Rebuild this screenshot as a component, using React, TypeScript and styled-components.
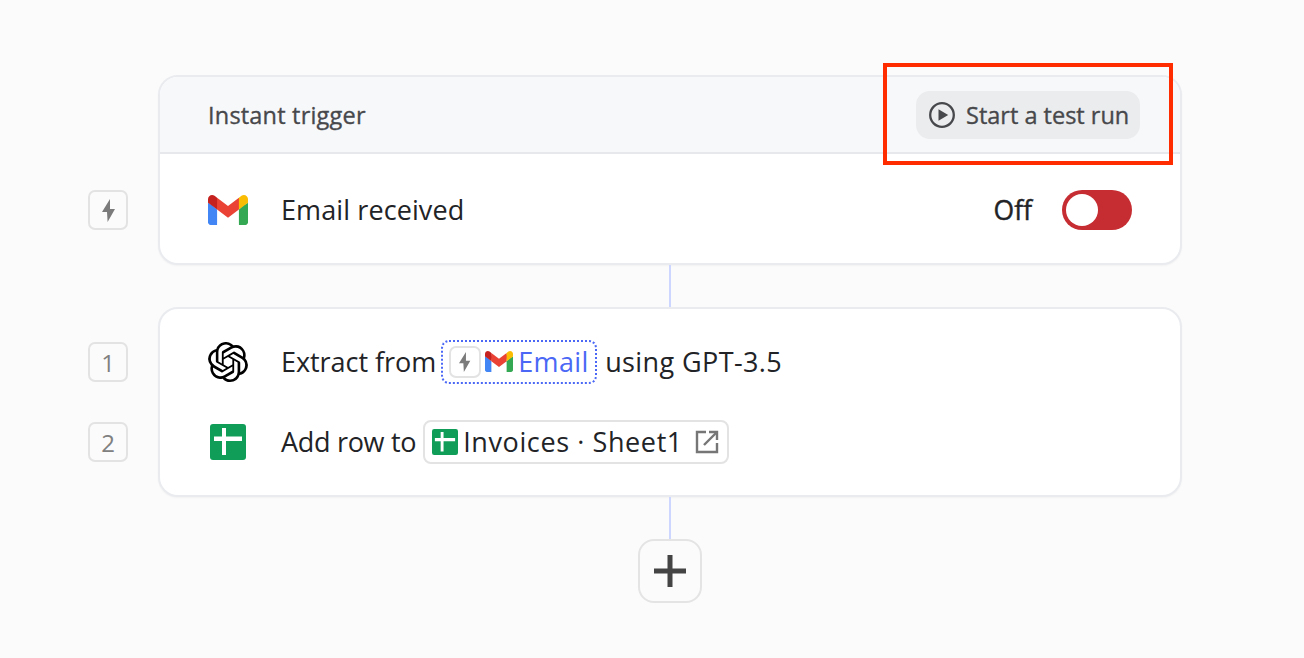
import React from 'react';
import styled, { createGlobalStyle } from 'styled-components';
import { SiOpenai } from 'react-icons/si';

const GlobalStyle = createGlobalStyle`
  html, body {
    margin: 0;
    height: 658px;
    overflow: hidden;
    background: #fbfbfb;
    font-family: "Open Sans", "Noto Sans", sans-serif;
    color: #222326;
  }
`;

const Page = styled.div`
  position: relative;
  box-sizing: border-box;
  width: 1304px;
  height: 658px;
  padding: 75px 122px 0 158px;
  display: flex;
  flex-direction: column;
  align-items: center;
`;

const Card = styled.section`
  box-sizing: border-box;
  width: 100%;
  height: 190px;
  background: #fff;
  border: 2px solid #e9ebef;
  border-radius: 20px;
  box-shadow: 0 1px 2px rgba(16, 24, 40, 0.04);
`;

const CardHeader = styled.header`
  box-sizing: border-box;
  height: 77px;
  padding: 0 40px 0 48px;
  display: flex;
  align-items: center;
  justify-content: space-between;
  background: #f7f8fa;
  border-bottom: 2px solid #e6e8ec;
  border-radius: 18px 18px 0 0;
  font-size: 23.5px;
  letter-spacing: 0.2px;
  -webkit-text-stroke: 0.35px #47484b;
  color: #47484b;
`;

const TestButton = styled.button`
  box-sizing: border-box;
  width: 224px;
  height: 48px;
  padding: 0 0 0 13px;
  display: flex;
  align-items: center;
  gap: 11px;
  border: 0;
  border-radius: 14px;
  background: #ebecee;
  color: #47484b;
  font: inherit;
  letter-spacing: 0;
`;

const TriggerBody = styled.div`
  box-sizing: border-box;
  height: 109px;
  padding: 3px 48px 0 0;
  display: flex;
  align-items: center;
  justify-content: space-between;
`;

const StepList = styled.div`
  height: 186px;
  box-sizing: border-box;
  padding: 31px 0;
  display: flex;
  flex-direction: column;
  gap: 36px;
`;

const Row = styled.div`
  height: 44px;
  margin-left: -72px;
  display: flex;
  align-items: center;
`;

const SideBadge = styled.div`
  box-sizing: border-box;
  flex: none;
  width: 40px;
  height: 40px;
  margin-right: 80px;
  display: flex;
  align-items: center;
  justify-content: center;
  border: 2px solid #e3e3e3;
  border-radius: 7px;
  color: #808080;
  font-size: 24px;
`;

const IconSlot = styled.div`
  flex: none;
  width: 40px;
  margin-right: 33px;
  display: flex;
  justify-content: center;
`;

const Sentence = styled.div`
  display: flex;
  align-items: center;
  gap: 8px;
  font-size: 27px;
  letter-spacing: 0.1px;
  white-space: nowrap;
`;

const Words = styled.span<{ $spacing?: number }>`
  margin-bottom: 2px;
  ${(p) => (p.$spacing !== undefined ? `letter-spacing: ${p.$spacing}px;` : '')}
`;

const EmailChip = styled.span`
  box-sizing: border-box;
  width: 156px;
  height: 44px;
  margin-left: -3px;
  padding-left: 6px;
  display: flex;
  align-items: center;
  gap: 5px;
  border: 2px dotted #4a68f5;
  border-radius: 8px;
  color: #4a68f5;
  letter-spacing: 0.4px;
`;

const MiniBadge = styled.span`
  box-sizing: border-box;
  flex: none;
  width: 32px;
  height: 32px;
  margin-right: -1px;
  display: flex;
  align-items: center;
  justify-content: center;
  border: 2px solid #e3e3e3;
  border-radius: 7px;
`;

const SheetChip = styled.span`
  box-sizing: border-box;
  width: 306px;
  height: 44px;
  margin-left: -1px;
  padding-left: 7px;
  display: flex;
  align-items: center;
  gap: 5px;
  border: 2px solid #e3e3e3;
  border-radius: 8px;
  letter-spacing: 0.6px;
`;

const ChipLink = styled.svg`
  flex: none;
  margin-left: 7px;
`;

const ToggleArea = styled.div`
  display: flex;
  align-items: center;
  gap: 30px;
  font-size: 26.5px;
  -webkit-text-stroke: 0.4px #222326;
`;

const Toggle = styled.div`
  box-sizing: border-box;
  width: 70px;
  height: 40px;
  padding: 4px;
  border-radius: 20px;
  background: #c62d32;
`;

const Knob = styled.div`
  width: 32px;
  height: 32px;
  border-radius: 50%;
  background: #fff;
`;

const Connector = styled.div`
  flex: none;
  width: 2px;
  height: 42px;
  background: #ccd6ff;
`;

const AddButton = styled.button`
  box-sizing: border-box;
  flex: none;
  width: 64px;
  height: 64px;
  padding: 0;
  display: flex;
  align-items: center;
  justify-content: center;
  background: #fbfbfb;
  border: 2px solid #e4e4e4;
  border-radius: 16px;
  color: #444;
`;

const Highlight = styled.div`
  position: absolute;
  left: 883px;
  top: 63px;
  box-sizing: border-box;
  width: 290px;
  height: 102px;
  border: 4px solid #ff2c00;
`;

const GmailLogo: React.FC<{ width: number }> = ({ width }) => (
  <svg width={width} viewBox="0 0 256 193" style={{ display: 'block' }}>
    <path fill="#4285F4" d="M58.182 192.05V93.14L27.507 65.077 0 49.504v125.091c0 9.658 7.825 17.455 17.455 17.455h40.727Z" />
    <path fill="#34A853" d="M197.818 192.05h40.727c9.659 0 17.455-7.826 17.455-17.455V49.505l-31.156 17.837-27.026 25.798v98.91Z" />
    <path fill="#EA4335" d="m58.182 93.14-4.174-38.647 4.174-36.989L128 69.868l69.818-52.364 4.67 34.992-4.67 40.644L128 145.504z" />
    <path fill="#FBBC04" d="M197.818 17.504V93.14L256 49.504V26.231c0-21.585-24.64-33.89-41.89-20.945l-16.292 12.218Z" />
    <path fill="#C5221F" d="m0 49.504 26.759 20.07L58.182 93.14V17.504L41.89 5.286C24.61-7.66 0 4.646 0 26.23v23.273Z" />
  </svg>
);

const SheetsLogo: React.FC<{ size: number }> = ({ size }) => (
  <svg width={size} height={size} viewBox="0 0 36 36" style={{ display: 'block' }}>
    <rect width="36" height="36" rx="3" fill="#109d58" />
    <path fill="#fff" d="M12 4h4v8.5h16v4.5H16v14h-4V17H4v-4.5h8z" />
  </svg>
);

const Bolt: React.FC<{ height: number }> = ({ height }) => (
  <svg height={height} viewBox="0 0 13 23" fill="#7b7b7b" style={{ display: 'block' }}>
    <path d="M8 0 0 13h5l.6 10L13 10H8z" />
  </svg>
);

const PlayIcon: React.FC = () => (
  <svg width="26" height="26" viewBox="0 0 26 26" style={{ display: 'block', flex: 'none' }}>
    <circle cx="13" cy="13" r="11.8" fill="none" stroke="#47484b" strokeWidth="2.3" />
    <path fill="#47484b" d="M9.5 7.2v11.6L19.2 13z" />
  </svg>
);

const PlusIcon: React.FC = () => (
  <svg width="32" height="32" viewBox="0 0 32 32" fill="#444" style={{ display: 'block' }}>
    <path d="M13.5 0h5v13.5H32v5H18.5V32h-5V18.5H0v-5h13.5z" />
  </svg>
);

const App: React.FC = () => (
  <>
    <GlobalStyle />
    <Page>
      <Card>
        <CardHeader>
          Instant trigger
          <TestButton>
            <PlayIcon />
            Start a test run
          </TestButton>
        </CardHeader>
        <TriggerBody>
          <Row>
            <SideBadge>
              <Bolt height={23} />
            </SideBadge>
            <IconSlot>
              <GmailLogo width={40} />
            </IconSlot>
            <Sentence>
              <Words>Email received</Words>
            </Sentence>
          </Row>
          <ToggleArea>
            Off
            <Toggle>
              <Knob />
            </Toggle>
          </ToggleArea>
        </TriggerBody>
      </Card>
      <Connector />
      <Card>
        <StepList>
          <Row>
            <SideBadge>1</SideBadge>
            <IconSlot>
              <SiOpenai size={40} color="#000" />
            </IconSlot>
            <Sentence>
              <Words $spacing={-0.05}>Extract from</Words>
              <EmailChip>
                <MiniBadge>
                  <Bolt height={20} />
                </MiniBadge>
                <GmailLogo width={28} />
                <Words>Email</Words>
              </EmailChip>
              <Words $spacing={0.4}>using GPT-3.5</Words>
            </Sentence>
          </Row>
          <Row>
            <SideBadge>2</SideBadge>
            <IconSlot>
              <SheetsLogo size={36} />
            </IconSlot>
            <Sentence>
              <Words $spacing={-0.3}>Add row to</Words>
              <SheetChip>
                <SheetsLogo size={26} />
                <Words>Invoices · Sheet1</Words>
                <ChipLink width="24" height="24" viewBox="0 0 24 24" fill="none" stroke="#767676" strokeWidth="2.4">
                  <path d="M11 2H2v20h20v-9" />
                  <path d="M14 2h8v8" />
                  <path d="M22 2 9 15" />
                </ChipLink>
              </SheetChip>
            </Sentence>
          </Row>
        </StepList>
      </Card>
      <Connector />
      <AddButton>
        <PlusIcon />
      </AddButton>
      <Highlight />
    </Page>
  </>
);

export default App;
